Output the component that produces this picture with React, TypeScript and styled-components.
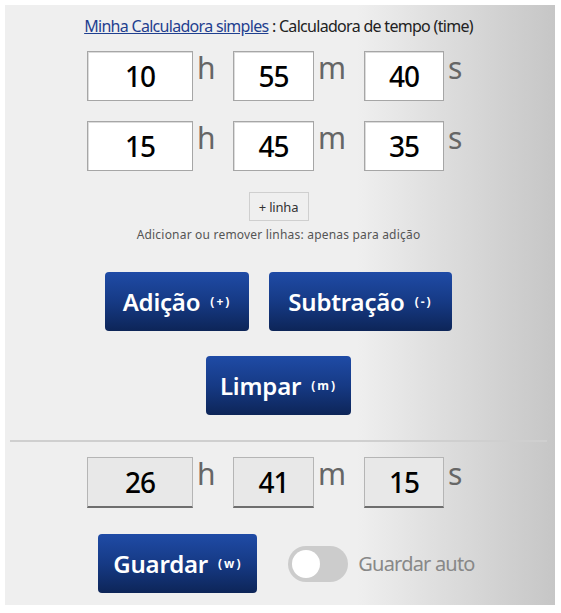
import React from "react";
import styled, { createGlobalStyle } from "styled-components";

const FONT = `"Noto Sans", "DejaVu Sans", sans-serif`;

const Global = createGlobalStyle`
  html, body { margin: 0; padding: 0; background: #fff; }
  body { font-family: ${FONT}; }
`;

const Panel = styled.div`
  margin: 5px 6px 0 5px;
  width: 550px;
  height: 600px;
  box-sizing: border-box;
  background: linear-gradient(to right, #efefef 0%, #efefef 64%, #c6c6c6 100%);
  padding: 10px 8px 12px 5px;
  display: flex;
  flex-direction: column;
  align-items: center;
`;

const Title = styled.div`
  font-size: 16px;
  line-height: 22px;
  letter-spacing: -0.7px;
  color: #222;
  a {
    color: #1f3f8f;
    text-decoration: underline;
  }
`;

const TimeRow = styled.div<{ $mt: number }>`
  display: flex;
  align-items: flex-start;
  margin-top: ${(p) => p.$mt}px;
`;

const TimeBox = styled.input<{ $w: number; $result?: boolean }>`
  width: ${(p) => p.$w}px;
  height: ${(p) => (p.$result ? 51 : 50)}px;
  box-sizing: border-box;
  margin: 0;
  padding: 0;
  text-align: center;
  font-family: ${FONT};
  font-weight: 500;
  font-size: 28px;
  letter-spacing: -1px;
  color: #000;
  outline: none;
  background: ${(p) => (p.$result ? "#e8e8e8" : "#fff")};
  border: 1px solid ${(p) => (p.$result ? "#b5b5b5" : "#a6a6a6")};
  border-bottom: ${(p) => (p.$result ? "2px solid #6e6e6e" : "1px solid #a6a6a6")};
  box-shadow: ${(p) => (p.$result ? "none" : "inset 1px 1px 0 #dcdcdc")};
`;

const Unit = styled.span<{ $w: number }>`
  width: ${(p) => p.$w}px;
  box-sizing: border-box;
  padding-left: 4px;
  padding-top: 2px;
  font-size: 30px;
  line-height: 1;
  color: #666;
`;

const PlusButton = styled.button`
  margin-top: 21px;
  width: 60px;
  height: 30px;
  box-sizing: border-box;
  background: #efefef;
  border: 1px solid #cfcfcf;
  font-family: ${FONT};
  font-size: 13px;
  letter-spacing: -0.2px;
  color: #333;
  padding: 0;
`;

const Hint = styled.div`
  margin-top: 6px;
  font-size: 12px;
  line-height: 16px;
  letter-spacing: 0.2px;
  color: #555;
`;

const ButtonRow = styled.div<{ $mt: number }>`
  display: flex;
  gap: 20px;
  margin-top: ${(p) => p.$mt}px;
  align-items: center;
`;

const BlueButton = styled.button<{ $w: number }>`
  width: ${(p) => p.$w}px;
  height: 59px;
  border: none;
  border-radius: 4px;
  background: linear-gradient(to bottom, #1f4ba6 0%, #163a85 50%, #0d2558 100%);
  color: #fff;
  font-family: ${FONT};
  font-size: 24px;
  font-weight: 600;
  letter-spacing: -0.2px;
  padding: 0;
  display: flex;
  align-items: center;
  justify-content: center;
`;

const Key = styled.span`
  font-size: 12px;
  font-weight: bold;
  letter-spacing: 2px;
  margin-left: 10px;
`;

const Divider = styled.hr`
  align-self: stretch;
  margin: 25px 0 0 0;
  border: none;
  height: 2px;
  background: #cfcfcf;
`;

const SaveRow = styled.div`
  display: flex;
  align-items: center;
  margin-top: 26px;
  padding-left: 16px;
`;

const Toggle = styled.div`
  width: 60px;
  height: 36px;
  box-sizing: border-box;
  border-radius: 18px;
  background: #cccccc;
  display: flex;
  align-items: center;
  padding: 0 4px;
  margin-left: 31px;
`;

const Knob = styled.div`
  width: 28px;
  height: 28px;
  border-radius: 50%;
  background: #fff;
`;

const AutoLabel = styled.span`
  margin-left: 10px;
  font-size: 20px;
  letter-spacing: -0.8px;
  color: #888;
`;

function Row({ vals, mt, result }: { vals: string[]; mt: number; result?: boolean }) {
  return (
    <TimeRow $mt={mt}>
      <TimeBox $w={106} $result={result} defaultValue={vals[0]} readOnly />
      <Unit $w={40}>h</Unit>
      <TimeBox $w={81} $result={result} defaultValue={vals[1]} readOnly />
      <Unit $w={50}>m</Unit>
      <TimeBox $w={80} $result={result} defaultValue={vals[2]} readOnly />
      <Unit $w={26}>s</Unit>
    </TimeRow>
  );
}

export default function App() {
  return (
    <>
      <Global />
      <Panel>
        <Title>
          <a href="#">Minha Calculadora simples</a> : Calculadora de tempo (time)
        </Title>
        <Row vals={["10", "55", "40"]} mt={14} />
        <Row vals={["15", "45", "35"]} mt={20} />
        <PlusButton>+ linha</PlusButton>
        <Hint>Adicionar ou remover linhas: apenas para adição</Hint>
        <ButtonRow $mt={29}>
          <BlueButton $w={144}>
            Adição<Key>(+)</Key>
          </BlueButton>
          <BlueButton $w={183}>
            Subtração<Key>(-)</Key>
          </BlueButton>
        </ButtonRow>
        <ButtonRow $mt={25}>
          <BlueButton $w={145}>
            Limpar<Key>(m)</Key>
          </BlueButton>
        </ButtonRow>
        <Divider />
        <Row vals={["26", "41", "15"]} mt={15} result />
        <SaveRow>
          <BlueButton $w={159}>
            Guardar<Key>(w)</Key>
          </BlueButton>
          <Toggle>
            <Knob />
          </Toggle>
          <AutoLabel>Guardar auto</AutoLabel>
        </SaveRow>
      </Panel>
    </>
  );
}
